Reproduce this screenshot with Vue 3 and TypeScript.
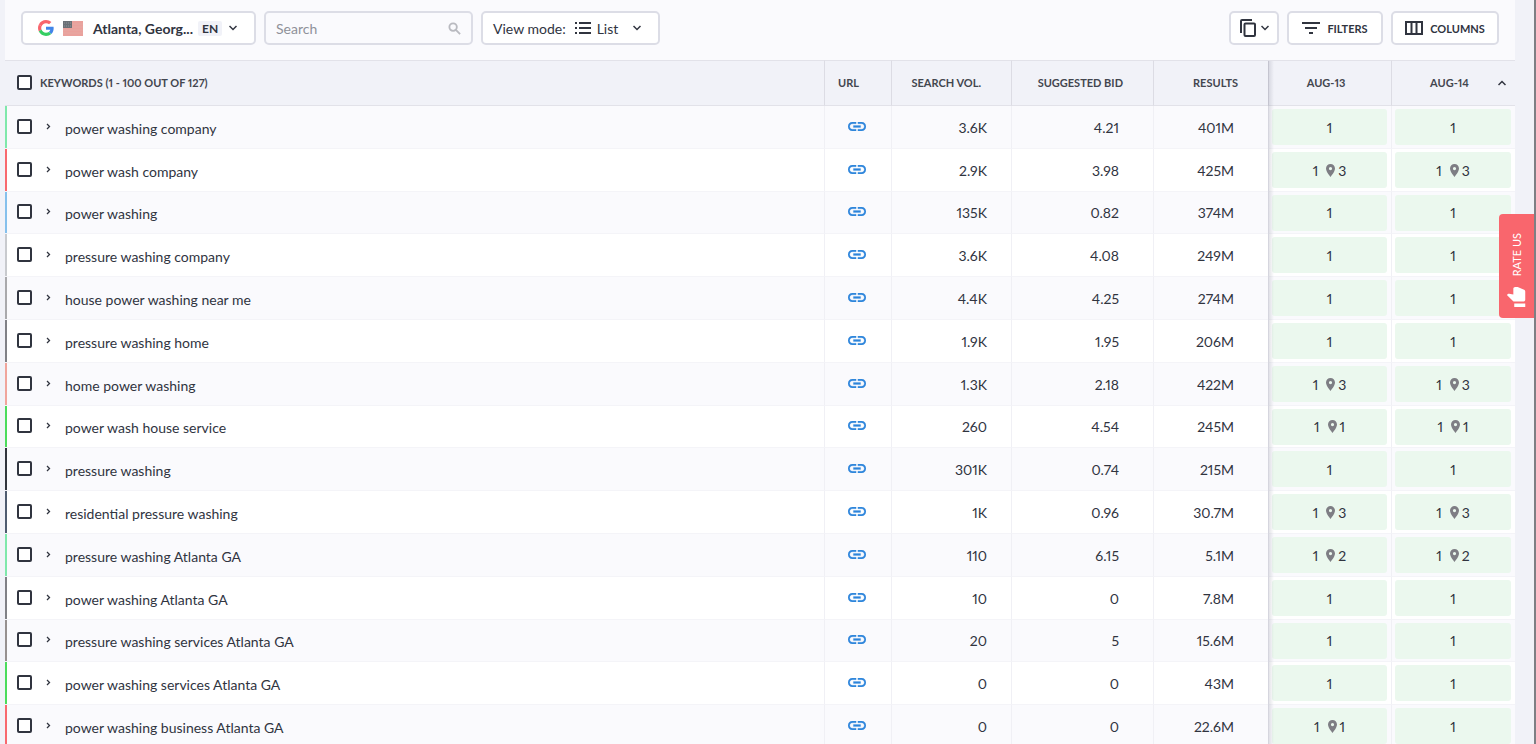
<script setup lang="ts">
import { ref, computed } from 'vue'

interface Rank {
  pos: number
  map?: number
}

interface Keyword {
  name: string
  tone: string
  volume: string
  bid: string
  results: string
  ranks: [Rank, Rank]
}

const same = (map?: number): [Rank, Rank] => [{ pos: 1, map }, { pos: 1, map }]

const keywords: Keyword[] = [
  { name: 'power washing company', tone: 'mint', volume: '3.6K', bid: '4.21', results: '401M', ranks: same() },
  { name: 'power wash company', tone: 'red', volume: '2.9K', bid: '3.98', results: '425M', ranks: same(3) },
  { name: 'power washing', tone: 'blue', volume: '135K', bid: '0.82', results: '374M', ranks: same() },
  { name: 'pressure washing company', tone: 'silver', volume: '3.6K', bid: '4.08', results: '249M', ranks: same() },
  { name: 'house power washing near me', tone: 'ash', volume: '4.4K', bid: '4.25', results: '274M', ranks: same() },
  { name: 'pressure washing home', tone: 'gray', volume: '1.9K', bid: '1.95', results: '206M', ranks: same() },
  { name: 'home power washing', tone: 'salmon', volume: '1.3K', bid: '2.18', results: '422M', ranks: same(3) },
  { name: 'power wash house service', tone: 'green', volume: '260', bid: '4.54', results: '245M', ranks: same(1) },
  { name: 'pressure washing', tone: 'black', volume: '301K', bid: '0.74', results: '215M', ranks: same() },
  { name: 'residential pressure washing', tone: 'slate', volume: '1K', bid: '0.96', results: '30.7M', ranks: same(3) },
  { name: 'pressure washing Atlanta GA', tone: 'mint', volume: '110', bid: '6.15', results: '5.1M', ranks: same(2) },
  { name: 'power washing Atlanta GA', tone: 'gray', volume: '10', bid: '0', results: '7.8M', ranks: same() },
  { name: 'pressure washing services Atlanta GA', tone: 'taupe', volume: '20', bid: '5', results: '15.6M', ranks: same() },
  { name: 'power washing services Atlanta GA', tone: 'green', volume: '0', bid: '0', results: '43M', ranks: same() },
  { name: 'power washing business Atlanta GA', tone: 'red', volume: '0', bid: '0', results: '22.6M', ranks: [{ pos: 1, map: 1 }, { pos: 1 }] },
]

const search = ref('')
const viewMode = ref('List')
const selected = ref<string[]>([])

const allSelected = computed({
  get: () => selected.value.length === keywords.length,
  set: (on: boolean) => {
    selected.value = on ? keywords.map((k) => k.name) : []
  },
})
</script>

<template>
  <div class="page">
    <main class="panel">
      <div class="toolbar">
        <button class="box location" type="button" aria-haspopup="listbox">
          <svg class="google" viewBox="0 0 48 48" aria-hidden="true">
            <path fill="#f8646c" d="M24 9.5c3.5 0 6.7 1.2 9.200 3.600l6.900-6.900C35.900 2.400 30.500 0 24 0 14.600 0 6.500 5.400 2.600 13.200l8 6.200C12.400 13.700 17.700 9.500 24 9.500z" />
            <path fill="#4285e8" d="M47 24.500c0-1.600-.2-3.100-.4-4.500H24v9h12.900c-.6 3-2.200 5.500-4.700 7.200l7.700 6C44.400 38 47 31.800 47 24.500z" />
            <path fill="#f8646c" d="M10.500 28.600c-.5-1.500-.8-3-.8-4.600s.3-3.100.8-4.600l-8-6.200C.9 16.500 0 20.100 0 24s.9 7.500 2.600 10.800z" />
            <path fill="#35cf62" d="M24 48c6.500 0 11.900-2.100 15.900-5.800l-7.700-6c-2.200 1.500-4.900 2.300-8.200 2.300-6.300 0-11.600-4.200-13.500-9.900l-8 6.200C6.500 42.600 14.600 48 24 48z" />
          </svg>
          <svg class="flag" viewBox="0 0 20 15" aria-hidden="true">
            <rect width="20" height="15" fill="#eaa19c" />
            <path d="M0 3h20M0 6h20M0 9h20M0 12h20" stroke="#e6a9a3" />
            <rect width="9" height="7" fill="#6b7177" />
            <path d="M1 2h7M1 5h7" stroke="#8f949a" stroke-dasharray="1 1" />
          </svg>
          <span class="place">Atlanta, Georg...</span>
          <span class="lang">EN</span>
          <svg class="chev" viewBox="0 0 8 6" aria-hidden="true"><path d="M.5 1L4 4.500 7.500 1" /></svg>
        </button>

        <div class="box search">
          <input v-model="search" type="text" placeholder="Search" aria-label="Search" />
          <svg class="lens" viewBox="0 0 14 14" aria-hidden="true">
            <circle cx="5.500" cy="5.500" r="4" />
            <path d="M8.500 8.500l4.500 4.500" />
          </svg>
        </div>

        <div class="box view">
          <label for="view-mode">View mode:</label>
          <svg class="list" viewBox="0 0 16 12" aria-hidden="true">
            <path d="M0 1h2M0 6h2M0 11h2M4 1h12M4 6h12M4 11h12" />
          </svg>
          <select id="view-mode" v-model="viewMode">
            <option>List</option>
          </select>
          <svg class="chev" viewBox="0 0 8 6" aria-hidden="true"><path d="M.5 1L4 4.500 7.500 1" /></svg>
        </div>

        <div class="spacer"></div>

        <button class="box copy" type="button" aria-label="Copy">
          <svg class="pages" viewBox="0 0 16 18" aria-hidden="true">
            <path d="M1 14V2a1 1 0 0 1 1-1h10" />
            <rect x="4.500" y="4.500" width="10.500" height="12.500" rx="1" />
          </svg>
          <svg class="chev" viewBox="0 0 8 6" aria-hidden="true"><path d="M.5 1L4 4.500 7.500 1" /></svg>
        </button>
        <button class="box action filters" type="button">
          <svg class="funnel" viewBox="0 0 18 12" aria-hidden="true">
            <path d="M0 1h18M3 6h12M7 11h4" />
          </svg>
          FILTERS
        </button>
        <button class="box action columns" type="button">
          <svg class="cols" viewBox="0 0 18 14" aria-hidden="true">
            <rect x="1" y="1" width="16" height="12" />
            <path d="M6.500 1v12M11.500 1v12" />
          </svg>
          COLUMNS
        </button>
      </div>

      <table class="grid">
        <colgroup>
          <col />
          <col class="w-url" />
          <col class="w-vol" />
          <col class="w-bid" />
          <col class="w-res" />
          <col class="w-day" />
          <col class="w-last" />
        </colgroup>
        <thead>
          <tr>
            <th scope="col">
              <div class="head">
                <input id="all" v-model="allSelected" type="checkbox" />
                <label for="all">KEYWORDS (1 - 100 OUT OF 127)</label>
              </div>
            </th>
            <th scope="col" class="h-url">URL</th>
            <th scope="col" class="h-num">SEARCH VOL.</th>
            <th scope="col" class="h-num">SUGGESTED BID</th>
            <th scope="col" class="h-num edge">RESULTS</th>
            <th scope="col" class="h-day">AUG-13</th>
            <th scope="col" class="h-day">
              AUG-14
              <svg class="sort" viewBox="0 0 8 6" aria-hidden="true"><path d="M.5 5L4 1.500 7.500 5" /></svg>
            </th>
          </tr>
        </thead>
        <tbody>
          <tr v-for="(k, i) in keywords" :key="k.name">
            <td class="mark" :class="k.tone">
              <div class="name">
                <input :id="'kw' + i" v-model="selected" type="checkbox" :value="k.name" />
                <button class="expand" type="button" :aria-label="'Expand ' + k.name">
                  <svg viewBox="0 0 5 7" aria-hidden="true"><path d="M1 1l2.500 2.500L1 6" /></svg>
                </button>
                <label :for="'kw' + i">{{ k.name }}</label>
              </div>
            </td>
            <td class="url">
              <a href="#" :aria-label="'URL for ' + k.name">
                <svg viewBox="2 7 20 10" aria-hidden="true">
                  <path d="M3.900 12c0-1.710 1.390-3.100 3.100-3.100h4V7H7c-2.760 0-5 2.240-5 5s2.240 5 5 5h4v-1.900H7c-1.710 0-3.100-1.390-3.100-3.100zM8 13h8v-2H8v2zm9-6h-4v1.900h4c1.710 0 3.100 1.390 3.100 3.100s-1.390 3.100-3.100 3.100h-4V17h4c2.760 0 5-2.240 5-5s-2.240-5-5-5z" />
                </svg>
              </a>
            </td>
            <td class="num vol">{{ k.volume }}</td>
            <td class="num">{{ k.bid }}</td>
            <td class="num edge">{{ k.results }}</td>
            <td v-for="(r, d) in k.ranks" :key="d" class="day">
              <div class="rank">
                <span>{{ r.pos }}</span>
                <span v-if="r.map" class="map">
                  <svg viewBox="5 2 14 20" aria-hidden="true">
                    <path d="M12 2C8.130 2 5 5.130 5 9c0 5.250 7 13 7 13s7-7.750 7-13c0-3.870-3.130-7-7-7zm0 9.500a2.500 2.500 0 0 1 0-5 2.500 2.500 0 0 1 0 5z" />
                  </svg>{{ r.map }}
                </span>
              </div>
            </td>
          </tr>
        </tbody>
      </table>
    </main>

    <button class="rate" type="button">
      <span>RATE US</span>
      <svg viewBox="0 0 24 24" aria-hidden="true">
        <path transform="rotate(-90 12 12)" d="M1 21h4V9H1v12zm22-11c0-1.100-.9-2-2-2h-6.310l.95-4.570.03-.320c0-.410-.170-.790-.440-1.060L14.170 1 7.590 7.590C7.220 7.950 7 8.450 7 9v10c0 1.100.9 2 2 2h9c.830 0 1.540-.500 1.840-1.220l3.020-7.050c.090-.230.140-.470.140-.730v-2z" />
      </svg>
    </button>
  </div>
</template>

<style>
body {
  margin: 0;
  background: #f1f2f8;
}
</style>

<style scoped>
.page {
  box-sizing: border-box;
  height: 100vh;
  overflow: hidden;
  padding: 0 19px 0 5px;
  border-right: 2px solid #7e7f84;
  background: #f1f2f8;
  color: #30343f;
  font-family: Lato, "Liberation Sans", sans-serif;
  font-size: 14px;
  font-weight: 400;
  font-variant-numeric: proportional-nums;
}

button,
input,
select {
  font: inherit;
  color: inherit;
}

svg {
  display: block;
  flex: none;
}

.toolbar {
  box-sizing: border-box;
  display: flex;
  align-items: center;
  gap: 8px;
  height: 60px;
  padding: 0 16px 4px;
  background: #fafafd;
}

.box {
  box-sizing: border-box;
  display: flex;
  align-items: center;
  height: 34px;
  padding: 0;
  border: 2px solid #dcdde6;
  border-radius: 5px;
  background: #fff;
  white-space: nowrap;
}

.spacer {
  flex: 1;
}

.location {
  width: 235px;
  padding-left: 15px;
}

.google {
  width: 16px;
  height: 16px;
}

.flag {
  width: 20px;
  height: 15px;
  margin: 0 10px 0 9px;
}

.place {
  font-weight: 700;
}

.lang {
  margin: 0 7px 0 5px;
  padding: 0 4px;
  border-radius: 2px;
  background: #f1f2f8;
  font-size: 12px;
  font-weight: 700;
  line-height: 15px;
}

.chev {
  width: 8px;
  height: 6px;
  fill: none;
  stroke: #30343f;
  stroke-width: 1.500;
}

.search {
  width: 209px;
  padding: 0 10px;
  background: #fafafd;
}

.search input {
  flex: 1;
  min-width: 0;
  padding: 0;
  border: 0;
  outline: 0;
  background: none;
}

.search input::placeholder {
  color: #8f9199;
  opacity: 1;
}

.lens {
  width: 13px;
  height: 13px;
  fill: none;
  stroke: #b9bac0;
  stroke-width: 2;
}

.view {
  width: 179px;
  padding-left: 10px;
}

.list {
  width: 16px;
  height: 12px;
  margin: 0 6px 0 9px;
  stroke: #30343f;
  stroke-width: 2;
}

.view select {
  width: 36px;
  padding: 0;
  border: 0;
  appearance: none;
  background: none;
}

.copy {
  width: 50px;
  justify-content: center;
  gap: 5px;
}

.pages {
  width: 16px;
  height: 18px;
  fill: none;
  stroke: #30343f;
  stroke-width: 2;
}

.action {
  justify-content: center;
  gap: 7px;
  font-size: 11px;
  font-weight: 700;
}

.filters {
  width: 96px;
}

.columns {
  width: 108px;
}

.funnel {
  width: 18px;
  height: 12px;
  stroke: #30343f;
  stroke-width: 2;
}

.cols {
  width: 18px;
  height: 14px;
  fill: none;
  stroke: #30343f;
  stroke-width: 2;
}

.grid {
  width: 100%;
  border-collapse: separate;
  border-spacing: 0;
  table-layout: fixed;
}

.w-url {
  width: 67px;
}

.w-vol {
  width: 120px;
}

.w-bid {
  width: 142px;
}

.w-res {
  width: 115px;
}

.w-day {
  width: 123px;
}

.w-last {
  width: 124px;
}

th,
td {
  box-sizing: border-box;
  position: relative;
  padding: 0;
  border-left: 1px solid #f0f0f5;
}

th {
  height: 46px;
  padding-bottom: 2px;
  border-top: 1px solid #e2e2e9;
  border-bottom: 1px solid #e2e2e9;
  border-left-color: #dcdce4;
  background: #f1f2f8;
  color: #43464f;
  font-size: 11px;
  font-weight: 700;
  white-space: nowrap;
}

td {
  height: 43px;
  border-bottom: 1px solid #f4f4f8;
}

tbody tr:nth-child(5n + 3) td {
  height: 42px;
}

th:first-child,
td:first-child {
  border-left: 0;
}

tbody tr {
  background: #fff;
}

tbody tr:nth-child(odd) {
  background: #fafafd;
}

.name,
.head {
  display: flex;
  align-items: center;
  padding-left: 12px;
}

.name {
  padding-bottom: 2px;
  color: #30343f;
}

.name input,
.head input {
  box-sizing: border-box;
  flex: none;
  width: 15px;
  height: 15px;
  margin: 0;
  border: 2px solid #30343f;
  border-radius: 2px;
  appearance: none;
  background: #fff;
}

.name input:checked,
.head input:checked {
  background: #30343f;
}

.head label {
  margin-left: 8px;
}

.name label {
  padding-top: 4px;
}

.expand {
  display: flex;
  margin: 0 14px;
  padding: 0;
  border: 0;
  background: none;
}

.expand svg {
  width: 5px;
  height: 7px;
  fill: none;
  stroke: #30343f;
  stroke-width: 1.300;
}

.mark::before {
  content: "";
  position: absolute;
  inset: 0 auto 0 0;
  width: 2px;
  background: currentColor;
}

.mint { color: #7fe8ab; }
.red { color: #f8696f; }
.blue { color: #85c0ec; }
.silver { color: #c8cace; }
.ash { color: #a9a9ac; }
.gray { color: #808186; }
.salmon { color: #f0a59c; }
.green { color: #4cdc5c; }
.black { color: #30343c; }
.slate { color: #4f5c70; }
.taupe { color: #96908f; }

.h-url {
  padding-left: 13px;
  text-align: left;
}

.h-num {
  padding-right: 30px;
  text-align: right;
}

.h-day {
  padding-right: 8px;
  text-align: center;
}

.sort {
  position: absolute;
  top: 19px;
  right: 9px;
  width: 8px;
  height: 6px;
  fill: none;
  stroke: #30343f;
  stroke-width: 1.500;
}

.url a {
  display: flex;
  justify-content: center;
  margin: 0 2px 2px 0;
}

.url svg {
  width: 18px;
  height: 9px;
  fill: #2f86dc;
  stroke: #2f86dc;
  stroke-width: .3;
}

.num {
  padding-right: 34px;
  text-align: right;
}

.vol {
  padding-right: 24px;
}

.edge::after {
  content: "";
  position: absolute;
  z-index: 1;
  top: 0;
  bottom: -1px;
  left: 100%;
  width: 6px;
  background: linear-gradient(to right, rgba(60, 60, 90, 0.16), rgba(60, 60, 90, 0));
}

.day {
  padding: 0 4px 0 3px;
}

.rank {
  display: flex;
  align-items: center;
  justify-content: center;
  gap: 8px;
  height: 36px;
  border-radius: 3px;
  background: #ebf8ee;
}

.map {
  display: flex;
  align-items: center;
  gap: 3px;
}

.map svg {
  width: 9px;
  height: 13px;
  fill: #7e7e84;
}

.rate {
  position: fixed;
  z-index: 2;
  top: 214px;
  right: 2px;
  display: flex;
  flex-direction: column;
  align-items: center;
  justify-content: space-between;
  box-sizing: border-box;
  width: 35px;
  height: 104px;
  padding: 19px 0 10px;
  border: 0;
  border-radius: 4px 0 0 4px;
  background: #f9666d;
  color: #fff;
  font-size: 11px;
}

.rate span {
  writing-mode: vertical-rl;
  transform: rotate(180deg);
}

.rate svg {
  width: 22px;
  height: 22px;
  fill: #fff;
}
</style>
